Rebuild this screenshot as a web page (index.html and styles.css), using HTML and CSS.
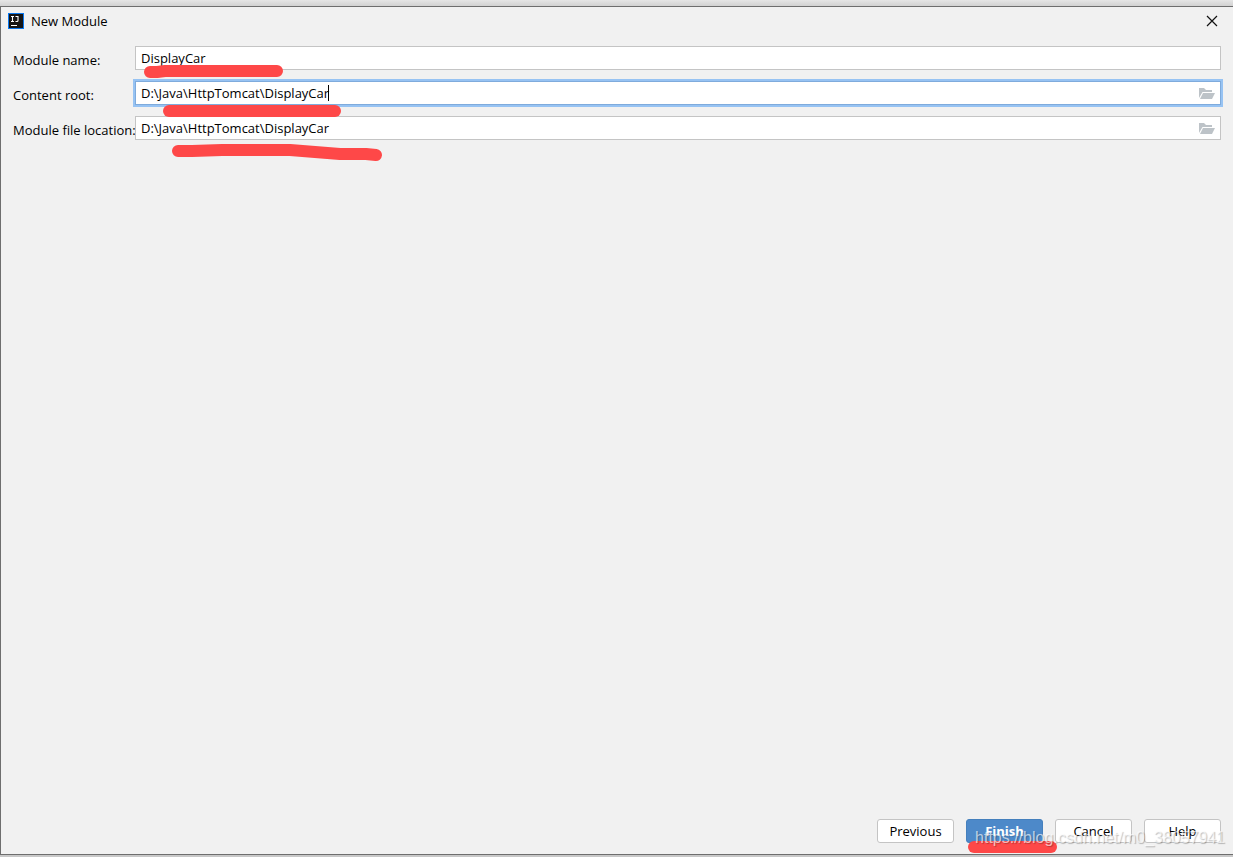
FILE: index.html
```
<!DOCTYPE html>
<html lang="en">
<head>
<meta charset="utf-8">
<title>New Module</title>
<link rel="stylesheet" href="styles.css">
</head>
<body>
<main class="dialog">
  <header class="titlebar">
    <svg class="logo" width="16" height="16" viewBox="0 0 16 16" aria-hidden="true">
      <rect width="16" height="16" fill="#0a78f0"/>
      <rect x="1" y="1" width="14" height="14" fill="#151515"/>
      <path d="M3 3.500h3M4.500 3.500v5M3 8.500h3M7.500 3.500h2.500v4q0 1-1 1h-1.500" fill="none" stroke="#fff" stroke-width="1.100"/>
      <path d="M3 12.500h6" stroke="#fff" stroke-width="1"/>
    </svg>
    <h1 class="title">New Module</h1>
    <button class="close" type="button" aria-label="Close">
      <svg width="12" height="12" viewBox="0 0 12 12"><path d="M1 1l10 10M11 1L1 11" stroke="#111" stroke-width="1.200"/></svg>
    </button>
  </header>
  <form class="form">
    <label class="label" for="name">Module name:</label>
    <div class="field">
      <input class="input" id="name" type="text" value="DisplayCar" spellcheck="false">
      <svg class="mark mark-name" width="142" height="16" viewBox="0 0 142 16"><path d="M7 9H14L22 8H134" /></svg>
    </div>
    <label class="label" for="root">Content root:</label>
    <div class="field">
      <input class="input active" id="root" type="text" value="D:\Java\HttpTomcat\DisplayCar" spellcheck="false">
      <span class="caret"></span>
      <button class="browse" type="button" aria-label="Browse content root">
        <svg width="16" height="12" viewBox="0 0 16 12" fill="#bdc3c8"><path d="M0 0h5l2 2h6v2H3.500L0 10z"/><path d="M4 5h12l-3 6H1z"/></svg>
      </button>
      <svg class="mark mark-root" width="180" height="14" viewBox="0 0 180 14"><path d="M7 7H173"/></svg>
    </div>
    <label class="label" for="location">Module file location:</label>
    <div class="field">
      <input class="input" id="location" type="text" value="D:\Java\HttpTomcat\DisplayCar" spellcheck="false">
      <button class="browse" type="button" aria-label="Browse module file location">
        <svg width="16" height="12" viewBox="0 0 16 12" fill="#bdc3c8"><path d="M0 0h5l2 2h6v2H3.500L0 10z"/><path d="M4 5h12l-3 6H1z"/></svg>
      </button>
      <svg class="mark mark-location" width="214" height="20" viewBox="0 0 214 20"><path d="M8 9H22L52 8H120L170 12H196L206 13"/></svg>
    </div>
  </form>
  <footer class="actions">
    <button class="button" type="button">Previous</button>
    <div class="finish">
      <button class="button primary" type="button">Finish</button>
      <svg class="mark mark-finish" width="92" height="14" viewBox="0 0 92 14"><path d="M7 7H84"/></svg>
    </div>
    <button class="button" type="button">Cancel</button>
    <button class="button" type="button">Help</button>
    <span class="watermark">https://blog.csdn.net/m0_38057941</span>
  </footer>
</main>
</body>
</html>
```
FILE: styles.css
```
* { box-sizing: border-box; }
body {
  margin: 0;
  min-height: 100vh;
  padding: 6px 0 2px;
  display: flex;
  background: linear-gradient(#e6e6e6, #d2d2d2 6px, #c8c8c8);
  color: #000;
  font-family: "Open Sans", "Noto Sans", sans-serif;
  font-size: 13px;
  line-height: 18px;
}
.dialog {
  flex: 1;
  display: flex;
  flex-direction: column;
  border: 1px solid #6e6e6e;
  border-right: 0;
  background: #f1f1f1;
}
.titlebar {
  display: flex;
  align-items: center;
  height: 28px;
  padding: 0 15px 0 7px;
}
.title {
  flex: 1;
  margin: 0 0 0 7px;
  font-size: 13px;
  font-weight: 400;
}
.close, .browse {
  display: flex;
  padding: 0;
  border: 0;
  background: none;
}
.form {
  flex: 1;
  display: grid;
  grid-template-columns: 122px 1fr;
  grid-auto-rows: 24px;
  row-gap: 11px;
  padding: 11px 12px 0;
}
.label {
  padding-top: 5px;
  white-space: nowrap;
}
.field { position: relative; }
.input {
  display: block;
  width: 100%;
  height: 24px;
  padding: 0 28px 1px 5px;
  border: 1px solid #c4c4c4;
  background: #fff;
  color: #000;
  font: inherit;
  outline: 0;
}
.active {
  border-color: #7fabdc;
  box-shadow: 0 0 0 2px #97c3f3;
}
.caret {
  position: absolute;
  left: 193px;
  top: 4px;
  width: 1px;
  height: 16px;
  background: #000;
}
.browse {
  position: absolute;
  right: 6px;
  top: 7px;
}
.mark {
  position: absolute;
  z-index: 1;
  pointer-events: none;
  fill: none;
  stroke: #fe4848;
  stroke-width: 12px;
  stroke-linecap: round;
  stroke-linejoin: round;
}
.mark-name { left: 8px; top: 17px; }
.mark-root { left: 27px; top: 23px; }
.mark-location { left: 35px; top: 26px; }
.mark-finish { left: 1px; top: 21px; }
.actions {
  position: relative;
  display: flex;
  justify-content: flex-end;
  gap: 12px;
  padding: 0 12px 11px;
}
.finish { position: relative; }
.button {
  width: 77px;
  height: 24px;
  padding: 0;
  border: 1px solid #c4c4c4;
  border-radius: 3px;
  background: #fff;
  color: #000;
  font: inherit;
}
.primary {
  border-color: #4580bd;
  background: #4d89c9;
  color: #fff;
  font-weight: 700;
}
.watermark {
  position: absolute;
  z-index: 2;
  right: 8px;
  top: 10px;
  color: rgba(255, 255, 255, 0.65);
  font-family: "Liberation Sans", Arial, sans-serif;
  font-size: 16px;
  text-shadow: 1px 1px 1px rgba(0, 0, 0, 0.25);
  pointer-events: none;
}
```
